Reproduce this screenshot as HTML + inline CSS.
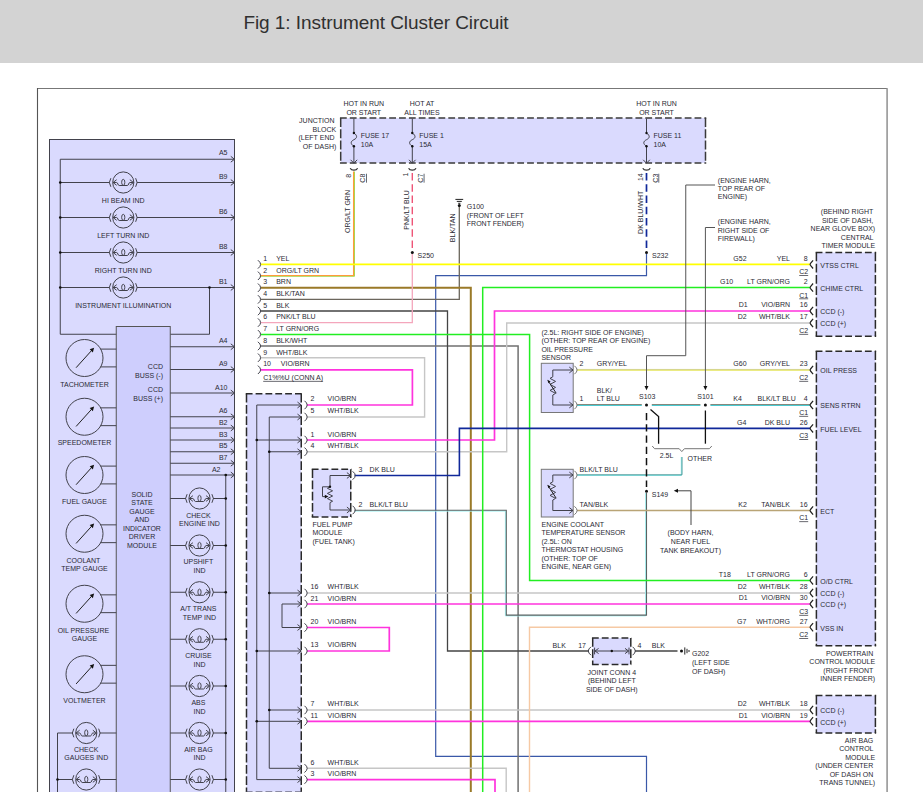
<!DOCTYPE html>
<html lang="en"><head><meta charset="utf-8"><title>Fig 1: Instrument Cluster Circuit</title>
<style>
html,body{margin:0;padding:0;background:#fff;}
body{width:923px;height:812px;overflow:hidden;position:relative;font-family:"Liberation Sans",Arial,sans-serif;}
#hdr{position:absolute;left:0;top:0;width:923px;height:63px;background:#d3d3d3;}
#hdr h1{position:absolute;left:243.4px;top:10.9px;margin:0;font-weight:normal;font-size:19px;line-height:24px;color:#303030;letter-spacing:-0.06px;white-space:nowrap;}
#dia{position:absolute;left:0;top:0;}
#dia text{font-family:"Liberation Sans",Arial,sans-serif;font-size:7px;fill:#2a2a34;}
</style></head><body>
<div id="hdr"><h1>Fig 1: Instrument Cluster Circuit</h1></div>
<svg id="dia" width="923" height="812" viewBox="0 0 923 812">
<defs><clipPath id="clip"><rect x="36" y="87" width="853" height="704.9"/></clipPath></defs>
<g clip-path="url(#clip)">
<line x1="37.5" y1="88.5" x2="887.5" y2="88.5" stroke="#777" stroke-width="1" />
<line x1="37.5" y1="88" x2="37.5" y2="800" stroke="#555" stroke-width="1.1" />
<line x1="887.1" y1="88.5" x2="887.1" y2="800" stroke="#9c9c9c" stroke-width="1.7" />
<rect x="49.5" y="139.5" width="185.0" height="660.5" fill="#dadafe" stroke="#42424c" stroke-width="1" />
<polyline points="234.5,159.25 60.25,159.25 60.25,334.25 209.5,334.25 209.5,287.5" fill="none" stroke="#42424c" stroke-width="1" />
<polyline points="230.8,156.35 234.5,159.25 230.8,162.15" fill="none" stroke="#42424c" stroke-width="1" />
<line x1="60.25" y1="182.5" x2="109.65" y2="182.5" stroke="#42424c" stroke-width="1" />
<line x1="136.85" y1="182.5" x2="234.5" y2="182.5" stroke="#42424c" stroke-width="1" />
<circle cx="123.25" cy="182.5" r="10.6" fill="none" stroke="#42424c" stroke-width="1"/>
<path d="M110.85,178.2 Q107.85,182.5 110.85,186.8" fill="none" stroke="#42424c" stroke-width="1" />
<path d="M135.65,178.2 Q138.65,182.5 135.65,186.8" fill="none" stroke="#42424c" stroke-width="1" />
<polyline points="116.65,179.7 113.05,182.5 116.65,185.3" fill="none" stroke="#42424c" stroke-width="1" />
<polyline points="129.85,179.7 133.45,182.5 129.85,185.3" fill="none" stroke="#42424c" stroke-width="1" />
<path d="M113.05,182.5 L116.65,182.5 C117.95,182.5 117.75,185.5 119.15,185.5 L127.35,185.5 C128.75,185.5 128.55,182.5 129.85,182.5 L133.45,182.5" fill="none" stroke="#42424c" stroke-width="1" />
<ellipse cx="123.25" cy="182.3" rx="1.6" ry="3" fill="none" stroke="#42424c" stroke-width="0.95"/>
<circle cx="60.25" cy="182.5" r="1.3" fill="#111"/>
<polyline points="230.8,179.6 234.5,182.5 230.8,185.4" fill="none" stroke="#42424c" stroke-width="1" />
<line x1="60.25" y1="217.5" x2="109.65" y2="217.5" stroke="#42424c" stroke-width="1" />
<line x1="136.85" y1="217.5" x2="234.5" y2="217.5" stroke="#42424c" stroke-width="1" />
<circle cx="123.25" cy="217.5" r="10.6" fill="none" stroke="#42424c" stroke-width="1"/>
<path d="M110.85,213.2 Q107.85,217.5 110.85,221.8" fill="none" stroke="#42424c" stroke-width="1" />
<path d="M135.65,213.2 Q138.65,217.5 135.65,221.8" fill="none" stroke="#42424c" stroke-width="1" />
<polyline points="116.65,214.7 113.05,217.5 116.65,220.3" fill="none" stroke="#42424c" stroke-width="1" />
<polyline points="129.85,214.7 133.45,217.5 129.85,220.3" fill="none" stroke="#42424c" stroke-width="1" />
<path d="M113.05,217.5 L116.65,217.5 C117.95,217.5 117.75,220.5 119.15,220.5 L127.35,220.5 C128.75,220.5 128.55,217.5 129.85,217.5 L133.45,217.5" fill="none" stroke="#42424c" stroke-width="1" />
<ellipse cx="123.25" cy="217.3" rx="1.6" ry="3" fill="none" stroke="#42424c" stroke-width="0.95"/>
<circle cx="60.25" cy="217.5" r="1.3" fill="#111"/>
<polyline points="230.8,214.6 234.5,217.5 230.8,220.4" fill="none" stroke="#42424c" stroke-width="1" />
<line x1="60.25" y1="252.5" x2="109.65" y2="252.5" stroke="#42424c" stroke-width="1" />
<line x1="136.85" y1="252.5" x2="234.5" y2="252.5" stroke="#42424c" stroke-width="1" />
<circle cx="123.25" cy="252.5" r="10.6" fill="none" stroke="#42424c" stroke-width="1"/>
<path d="M110.85,248.2 Q107.85,252.5 110.85,256.8" fill="none" stroke="#42424c" stroke-width="1" />
<path d="M135.65,248.2 Q138.65,252.5 135.65,256.8" fill="none" stroke="#42424c" stroke-width="1" />
<polyline points="116.65,249.7 113.05,252.5 116.65,255.3" fill="none" stroke="#42424c" stroke-width="1" />
<polyline points="129.85,249.7 133.45,252.5 129.85,255.3" fill="none" stroke="#42424c" stroke-width="1" />
<path d="M113.05,252.5 L116.65,252.5 C117.95,252.5 117.75,255.5 119.15,255.5 L127.35,255.5 C128.75,255.5 128.55,252.5 129.85,252.5 L133.45,252.5" fill="none" stroke="#42424c" stroke-width="1" />
<ellipse cx="123.25" cy="252.3" rx="1.6" ry="3" fill="none" stroke="#42424c" stroke-width="0.95"/>
<circle cx="60.25" cy="252.5" r="1.3" fill="#111"/>
<polyline points="230.8,249.6 234.5,252.5 230.8,255.4" fill="none" stroke="#42424c" stroke-width="1" />
<line x1="60.25" y1="287.5" x2="109.65" y2="287.5" stroke="#42424c" stroke-width="1" />
<line x1="136.85" y1="287.5" x2="234.5" y2="287.5" stroke="#42424c" stroke-width="1" />
<circle cx="123.25" cy="287.5" r="10.6" fill="none" stroke="#42424c" stroke-width="1"/>
<path d="M110.85,283.2 Q107.85,287.5 110.85,291.8" fill="none" stroke="#42424c" stroke-width="1" />
<path d="M135.65,283.2 Q138.65,287.5 135.65,291.8" fill="none" stroke="#42424c" stroke-width="1" />
<polyline points="116.65,284.7 113.05,287.5 116.65,290.3" fill="none" stroke="#42424c" stroke-width="1" />
<polyline points="129.85,284.7 133.45,287.5 129.85,290.3" fill="none" stroke="#42424c" stroke-width="1" />
<path d="M113.05,287.5 L116.65,287.5 C117.95,287.5 117.75,290.5 119.15,290.5 L127.35,290.5 C128.75,290.5 128.55,287.5 129.85,287.5 L133.45,287.5" fill="none" stroke="#42424c" stroke-width="1" />
<ellipse cx="123.25" cy="287.3" rx="1.6" ry="3" fill="none" stroke="#42424c" stroke-width="0.95"/>
<circle cx="60.25" cy="287.5" r="1.3" fill="#111"/>
<polyline points="230.8,284.6 234.5,287.5 230.8,290.4" fill="none" stroke="#42424c" stroke-width="1" />
<circle cx="209.5" cy="287.5" r="1.3" fill="#111"/>
<text x="227.5" y="155.35" text-anchor="end" >A5</text>
<text x="227.5" y="178.6" text-anchor="end" >B9</text>
<text x="227.5" y="213.6" text-anchor="end" >B6</text>
<text x="227.5" y="248.6" text-anchor="end" >B8</text>
<text x="227.5" y="283.6" text-anchor="end" >B1</text>
<text x="123.25" y="203.0" text-anchor="middle" >HI BEAM IND</text>
<text x="123.25" y="238.0" text-anchor="middle" >LEFT TURN IND</text>
<text x="123.25" y="273.0" text-anchor="middle" >RIGHT TURN IND</text>
<text x="123.25" y="308.0" text-anchor="middle" >INSTRUMENT ILLUMINATION</text>
<rect x="116.25" y="326.5" width="54.0" height="473.5" fill="#cecefd" stroke="#555" stroke-width="1" />
<circle cx="84.5" cy="358" r="18.5" fill="none" stroke="#42424c" stroke-width="1"/>
<line x1="100.71850794617063" y1="349.1" x2="116.25" y2="349.1" stroke="#42424c" stroke-width="1" />
<line x1="100.71850794617063" y1="366.9" x2="116.25" y2="366.9" stroke="#42424c" stroke-width="1" />
<line x1="76.1" y1="367.7" x2="92.6" y2="349.40000000000003" stroke="#222" stroke-width="1" />
<polygon points="94.1,347.8 89.69999999999999,349.2 92.89999999999999,352.40000000000003" fill="#111"/>
<circle cx="84.5" cy="416.75" r="18.5" fill="none" stroke="#42424c" stroke-width="1"/>
<line x1="100.71850794617063" y1="407.85" x2="116.25" y2="407.85" stroke="#42424c" stroke-width="1" />
<line x1="100.71850794617063" y1="425.65" x2="116.25" y2="425.65" stroke="#42424c" stroke-width="1" />
<line x1="76.1" y1="426.45" x2="92.6" y2="408.15000000000003" stroke="#222" stroke-width="1" />
<polygon points="94.1,406.55 89.69999999999999,407.95 92.89999999999999,411.15000000000003" fill="#111"/>
<circle cx="84.5" cy="475" r="18.5" fill="none" stroke="#42424c" stroke-width="1"/>
<line x1="100.71850794617063" y1="466.1" x2="116.25" y2="466.1" stroke="#42424c" stroke-width="1" />
<line x1="100.71850794617063" y1="483.9" x2="116.25" y2="483.9" stroke="#42424c" stroke-width="1" />
<line x1="76.1" y1="484.7" x2="92.6" y2="466.40000000000003" stroke="#222" stroke-width="1" />
<polygon points="94.1,464.8 89.69999999999999,466.2 92.89999999999999,469.40000000000003" fill="#111"/>
<circle cx="84.5" cy="533.75" r="18.5" fill="none" stroke="#42424c" stroke-width="1"/>
<line x1="100.71850794617063" y1="524.85" x2="116.25" y2="524.85" stroke="#42424c" stroke-width="1" />
<line x1="100.71850794617063" y1="542.65" x2="116.25" y2="542.65" stroke="#42424c" stroke-width="1" />
<line x1="76.1" y1="543.45" x2="92.6" y2="525.15" stroke="#222" stroke-width="1" />
<polygon points="94.1,523.55 89.69999999999999,524.9499999999999 92.89999999999999,528.15" fill="#111"/>
<circle cx="84.5" cy="603.75" r="18.5" fill="none" stroke="#42424c" stroke-width="1"/>
<line x1="100.71850794617063" y1="594.85" x2="116.25" y2="594.85" stroke="#42424c" stroke-width="1" />
<line x1="100.71850794617063" y1="612.65" x2="116.25" y2="612.65" stroke="#42424c" stroke-width="1" />
<line x1="76.1" y1="613.45" x2="92.6" y2="595.15" stroke="#222" stroke-width="1" />
<polygon points="94.1,593.55 89.69999999999999,594.9499999999999 92.89999999999999,598.15" fill="#111"/>
<circle cx="84.5" cy="674.25" r="18.5" fill="none" stroke="#42424c" stroke-width="1"/>
<line x1="100.71850794617063" y1="665.35" x2="116.25" y2="665.35" stroke="#42424c" stroke-width="1" />
<line x1="100.71850794617063" y1="683.15" x2="116.25" y2="683.15" stroke="#42424c" stroke-width="1" />
<line x1="76.1" y1="683.95" x2="92.6" y2="665.65" stroke="#222" stroke-width="1" />
<polygon points="94.1,664.05 89.69999999999999,665.4499999999999 92.89999999999999,668.65" fill="#111"/>
<text x="84.5" y="387.0" text-anchor="middle" >TACHOMETER</text>
<text x="84.5" y="445.0" text-anchor="middle" >SPEEDOMETER</text>
<text x="84.5" y="503.75" text-anchor="middle" >FUEL GAUGE</text>
<text x="83.4" y="563.0" text-anchor="middle" >COOLANT</text>
<text x="84.5" y="571.0" text-anchor="middle" >TEMP GAUGE</text>
<text x="83.4" y="633.0" text-anchor="middle" >OIL PRESSURE</text>
<text x="84.5" y="641.0" text-anchor="middle" >GAUGE</text>
<text x="84.5" y="703.0" text-anchor="middle" >VOLTMETER</text>
<line x1="170.25" y1="346.75" x2="234.5" y2="346.75" stroke="#42424c" stroke-width="1" />
<polyline points="230.8,343.85 234.5,346.75 230.8,349.65" fill="none" stroke="#42424c" stroke-width="1" />
<text x="227.5" y="343.25" text-anchor="end" >A4</text>
<line x1="170.25" y1="369.5" x2="234.5" y2="369.5" stroke="#42424c" stroke-width="1" />
<polyline points="230.8,366.6 234.5,369.5 230.8,372.4" fill="none" stroke="#42424c" stroke-width="1" />
<text x="227.5" y="366.0" text-anchor="end" >A9</text>
<line x1="170.25" y1="393" x2="234.5" y2="393" stroke="#42424c" stroke-width="1" />
<polyline points="230.8,390.1 234.5,393 230.8,395.9" fill="none" stroke="#42424c" stroke-width="1" />
<text x="227.5" y="389.5" text-anchor="end" >A10</text>
<line x1="170.25" y1="416.75" x2="234.5" y2="416.75" stroke="#42424c" stroke-width="1" />
<polyline points="230.8,413.85 234.5,416.75 230.8,419.65" fill="none" stroke="#42424c" stroke-width="1" />
<text x="227.5" y="413.25" text-anchor="end" >A6</text>
<line x1="170.25" y1="428" x2="234.5" y2="428" stroke="#42424c" stroke-width="1" />
<polyline points="230.8,425.1 234.5,428 230.8,430.9" fill="none" stroke="#42424c" stroke-width="1" />
<text x="227.5" y="424.5" text-anchor="end" >B2</text>
<line x1="170.25" y1="440" x2="234.5" y2="440" stroke="#42424c" stroke-width="1" />
<polyline points="230.8,437.1 234.5,440 230.8,442.9" fill="none" stroke="#42424c" stroke-width="1" />
<text x="227.5" y="436.5" text-anchor="end" >B3</text>
<line x1="170.25" y1="451.75" x2="234.5" y2="451.75" stroke="#42424c" stroke-width="1" />
<polyline points="230.8,448.85 234.5,451.75 230.8,454.65" fill="none" stroke="#42424c" stroke-width="1" />
<text x="227.5" y="448.25" text-anchor="end" >B5</text>
<line x1="170.25" y1="463.25" x2="234.5" y2="463.25" stroke="#42424c" stroke-width="1" />
<polyline points="230.8,460.35 234.5,463.25 230.8,466.15" fill="none" stroke="#42424c" stroke-width="1" />
<text x="227.5" y="459.75" text-anchor="end" >B7</text>
<line x1="170.25" y1="475" x2="234.5" y2="475" stroke="#42424c" stroke-width="1" />
<polyline points="230.8,472.1 234.5,475 230.8,477.9" fill="none" stroke="#42424c" stroke-width="1" />
<text x="220.5" y="471.5" text-anchor="end" >A2</text>
<text x="163" y="369.25" text-anchor="end" >CCD</text>
<text x="163" y="378.0" text-anchor="end" >BUSS (-)</text>
<text x="163" y="392.0" text-anchor="end" >CCD</text>
<text x="163" y="400.75" text-anchor="end" >BUSS (+)</text>
<text x="142" y="497.0" text-anchor="middle" >SOLID</text>
<text x="142" y="505.42" text-anchor="middle" >STATE</text>
<text x="142" y="513.84" text-anchor="middle" >GAUGE</text>
<text x="142" y="522.26" text-anchor="middle" >AND</text>
<text x="142" y="530.68" text-anchor="middle" >INDICATOR</text>
<text x="142" y="539.1" text-anchor="middle" >DRIVER</text>
<text x="142" y="547.52" text-anchor="middle" >MODULE</text>
<line x1="225.75" y1="475" x2="225.75" y2="800" stroke="#42424c" stroke-width="1" />
<circle cx="225.75" cy="475" r="1.3" fill="#111"/>
<line x1="170.25" y1="498.5" x2="185.9" y2="498.5" stroke="#42424c" stroke-width="1" />
<line x1="213.1" y1="498.5" x2="225.75" y2="498.5" stroke="#42424c" stroke-width="1" />
<circle cx="199.5" cy="498.5" r="10.6" fill="none" stroke="#42424c" stroke-width="1"/>
<path d="M187.1,494.2 Q184.1,498.5 187.1,502.8" fill="none" stroke="#42424c" stroke-width="1" />
<path d="M211.9,494.2 Q214.9,498.5 211.9,502.8" fill="none" stroke="#42424c" stroke-width="1" />
<polyline points="192.9,495.7 189.3,498.5 192.9,501.3" fill="none" stroke="#42424c" stroke-width="1" />
<polyline points="206.1,495.7 209.7,498.5 206.1,501.3" fill="none" stroke="#42424c" stroke-width="1" />
<path d="M189.3,498.5 L192.9,498.5 C194.2,498.5 194.0,501.5 195.4,501.5 L203.6,501.5 C205.0,501.5 204.8,498.5 206.1,498.5 L209.7,498.5" fill="none" stroke="#42424c" stroke-width="1" />
<ellipse cx="199.5" cy="498.3" rx="1.6" ry="3" fill="none" stroke="#42424c" stroke-width="0.95"/>
<circle cx="225.75" cy="498.5" r="1.3" fill="#111"/>
<line x1="170.25" y1="545.5" x2="185.9" y2="545.5" stroke="#42424c" stroke-width="1" />
<line x1="213.1" y1="545.5" x2="225.75" y2="545.5" stroke="#42424c" stroke-width="1" />
<circle cx="199.5" cy="545.5" r="10.6" fill="none" stroke="#42424c" stroke-width="1"/>
<path d="M187.1,541.2 Q184.1,545.5 187.1,549.8" fill="none" stroke="#42424c" stroke-width="1" />
<path d="M211.9,541.2 Q214.9,545.5 211.9,549.8" fill="none" stroke="#42424c" stroke-width="1" />
<polyline points="192.9,542.7 189.3,545.5 192.9,548.3" fill="none" stroke="#42424c" stroke-width="1" />
<polyline points="206.1,542.7 209.7,545.5 206.1,548.3" fill="none" stroke="#42424c" stroke-width="1" />
<path d="M189.3,545.5 L192.9,545.5 C194.2,545.5 194.0,548.5 195.4,548.5 L203.6,548.5 C205.0,548.5 204.8,545.5 206.1,545.5 L209.7,545.5" fill="none" stroke="#42424c" stroke-width="1" />
<ellipse cx="199.5" cy="545.3" rx="1.6" ry="3" fill="none" stroke="#42424c" stroke-width="0.95"/>
<circle cx="225.75" cy="545.5" r="1.3" fill="#111"/>
<line x1="170.25" y1="592.25" x2="185.9" y2="592.25" stroke="#42424c" stroke-width="1" />
<line x1="213.1" y1="592.25" x2="225.75" y2="592.25" stroke="#42424c" stroke-width="1" />
<circle cx="199.5" cy="592.25" r="10.6" fill="none" stroke="#42424c" stroke-width="1"/>
<path d="M187.1,587.95 Q184.1,592.25 187.1,596.55" fill="none" stroke="#42424c" stroke-width="1" />
<path d="M211.9,587.95 Q214.9,592.25 211.9,596.55" fill="none" stroke="#42424c" stroke-width="1" />
<polyline points="192.9,589.45 189.3,592.25 192.9,595.05" fill="none" stroke="#42424c" stroke-width="1" />
<polyline points="206.1,589.45 209.7,592.25 206.1,595.05" fill="none" stroke="#42424c" stroke-width="1" />
<path d="M189.3,592.25 L192.9,592.25 C194.2,592.25 194.0,595.25 195.4,595.25 L203.6,595.25 C205.0,595.25 204.8,592.25 206.1,592.25 L209.7,592.25" fill="none" stroke="#42424c" stroke-width="1" />
<ellipse cx="199.5" cy="592.05" rx="1.6" ry="3" fill="none" stroke="#42424c" stroke-width="0.95"/>
<circle cx="225.75" cy="592.25" r="1.3" fill="#111"/>
<line x1="170.25" y1="639.25" x2="185.9" y2="639.25" stroke="#42424c" stroke-width="1" />
<line x1="213.1" y1="639.25" x2="225.75" y2="639.25" stroke="#42424c" stroke-width="1" />
<circle cx="199.5" cy="639.25" r="10.6" fill="none" stroke="#42424c" stroke-width="1"/>
<path d="M187.1,634.95 Q184.1,639.25 187.1,643.55" fill="none" stroke="#42424c" stroke-width="1" />
<path d="M211.9,634.95 Q214.9,639.25 211.9,643.55" fill="none" stroke="#42424c" stroke-width="1" />
<polyline points="192.9,636.45 189.3,639.25 192.9,642.05" fill="none" stroke="#42424c" stroke-width="1" />
<polyline points="206.1,636.45 209.7,639.25 206.1,642.05" fill="none" stroke="#42424c" stroke-width="1" />
<path d="M189.3,639.25 L192.9,639.25 C194.2,639.25 194.0,642.25 195.4,642.25 L203.6,642.25 C205.0,642.25 204.8,639.25 206.1,639.25 L209.7,639.25" fill="none" stroke="#42424c" stroke-width="1" />
<ellipse cx="199.5" cy="639.05" rx="1.6" ry="3" fill="none" stroke="#42424c" stroke-width="0.95"/>
<circle cx="225.75" cy="639.25" r="1.3" fill="#111"/>
<line x1="170.25" y1="686" x2="185.9" y2="686" stroke="#42424c" stroke-width="1" />
<line x1="213.1" y1="686" x2="225.75" y2="686" stroke="#42424c" stroke-width="1" />
<circle cx="199.5" cy="686" r="10.6" fill="none" stroke="#42424c" stroke-width="1"/>
<path d="M187.1,681.7 Q184.1,686 187.1,690.3" fill="none" stroke="#42424c" stroke-width="1" />
<path d="M211.9,681.7 Q214.9,686 211.9,690.3" fill="none" stroke="#42424c" stroke-width="1" />
<polyline points="192.9,683.2 189.3,686 192.9,688.8" fill="none" stroke="#42424c" stroke-width="1" />
<polyline points="206.1,683.2 209.7,686 206.1,688.8" fill="none" stroke="#42424c" stroke-width="1" />
<path d="M189.3,686 L192.9,686 C194.2,686 194.0,689 195.4,689 L203.6,689 C205.0,689 204.8,686 206.1,686 L209.7,686" fill="none" stroke="#42424c" stroke-width="1" />
<ellipse cx="199.5" cy="685.8" rx="1.6" ry="3" fill="none" stroke="#42424c" stroke-width="0.95"/>
<circle cx="225.75" cy="686" r="1.3" fill="#111"/>
<line x1="170.25" y1="733" x2="185.9" y2="733" stroke="#42424c" stroke-width="1" />
<line x1="213.1" y1="733" x2="225.75" y2="733" stroke="#42424c" stroke-width="1" />
<circle cx="199.5" cy="733" r="10.6" fill="none" stroke="#42424c" stroke-width="1"/>
<path d="M187.1,728.7 Q184.1,733 187.1,737.3" fill="none" stroke="#42424c" stroke-width="1" />
<path d="M211.9,728.7 Q214.9,733 211.9,737.3" fill="none" stroke="#42424c" stroke-width="1" />
<polyline points="192.9,730.2 189.3,733 192.9,735.8" fill="none" stroke="#42424c" stroke-width="1" />
<polyline points="206.1,730.2 209.7,733 206.1,735.8" fill="none" stroke="#42424c" stroke-width="1" />
<path d="M189.3,733 L192.9,733 C194.2,733 194.0,736 195.4,736 L203.6,736 C205.0,736 204.8,733 206.1,733 L209.7,733" fill="none" stroke="#42424c" stroke-width="1" />
<ellipse cx="199.5" cy="732.8" rx="1.6" ry="3" fill="none" stroke="#42424c" stroke-width="0.95"/>
<circle cx="225.75" cy="733" r="1.3" fill="#111"/>
<line x1="170.25" y1="779.5" x2="185.9" y2="779.5" stroke="#42424c" stroke-width="1" />
<line x1="213.1" y1="779.5" x2="225.75" y2="779.5" stroke="#42424c" stroke-width="1" />
<circle cx="199.5" cy="779.5" r="10.6" fill="none" stroke="#42424c" stroke-width="1"/>
<path d="M187.1,775.2 Q184.1,779.5 187.1,783.8" fill="none" stroke="#42424c" stroke-width="1" />
<path d="M211.9,775.2 Q214.9,779.5 211.9,783.8" fill="none" stroke="#42424c" stroke-width="1" />
<polyline points="192.9,776.7 189.3,779.5 192.9,782.3" fill="none" stroke="#42424c" stroke-width="1" />
<polyline points="206.1,776.7 209.7,779.5 206.1,782.3" fill="none" stroke="#42424c" stroke-width="1" />
<path d="M189.3,779.5 L192.9,779.5 C194.2,779.5 194.0,782.5 195.4,782.5 L203.6,782.5 C205.0,782.5 204.8,779.5 206.1,779.5 L209.7,779.5" fill="none" stroke="#42424c" stroke-width="1" />
<ellipse cx="199.5" cy="779.3" rx="1.6" ry="3" fill="none" stroke="#42424c" stroke-width="0.95"/>
<circle cx="225.75" cy="779.5" r="1.3" fill="#111"/>
<text x="198.4" y="518.0" text-anchor="middle" >CHECK</text>
<text x="199.5" y="526.0" text-anchor="middle" >ENGINE IND</text>
<text x="198.4" y="564.25" text-anchor="middle" >UPSHIFT</text>
<text x="199.5" y="573.0" text-anchor="middle" >IND</text>
<text x="198.4" y="611.0" text-anchor="middle" >A/T TRANS</text>
<text x="199.5" y="620.0" text-anchor="middle" >TEMP IND</text>
<text x="198.4" y="658.0" text-anchor="middle" >CRUISE</text>
<text x="199.5" y="666.75" text-anchor="middle" >IND</text>
<text x="198.4" y="705.0" text-anchor="middle" >ABS</text>
<text x="199.5" y="714.25" text-anchor="middle" >IND</text>
<text x="198.4" y="751.75" text-anchor="middle" >AIR BAG</text>
<text x="199.5" y="759.75" text-anchor="middle" >IND</text>
<polyline points="72.65,733 57.5,733 57.5,800" fill="none" stroke="#42424c" stroke-width="1" />
<line x1="99.85" y1="733" x2="116.25" y2="733" stroke="#42424c" stroke-width="1" />
<circle cx="86.25" cy="733" r="10.6" fill="none" stroke="#42424c" stroke-width="1"/>
<path d="M73.85,728.7 Q70.85,733 73.85,737.3" fill="none" stroke="#42424c" stroke-width="1" />
<path d="M98.65,728.7 Q101.65,733 98.65,737.3" fill="none" stroke="#42424c" stroke-width="1" />
<polyline points="79.65,730.2 76.05,733 79.65,735.8" fill="none" stroke="#42424c" stroke-width="1" />
<polyline points="92.85,730.2 96.45,733 92.85,735.8" fill="none" stroke="#42424c" stroke-width="1" />
<path d="M76.05,733 L79.65,733 C80.95,733 80.75,736 82.15,736 L90.35,736 C91.75,736 91.55,733 92.85,733 L96.45,733" fill="none" stroke="#42424c" stroke-width="1" />
<ellipse cx="86.25" cy="732.8" rx="1.6" ry="3" fill="none" stroke="#42424c" stroke-width="0.95"/>
<line x1="57.5" y1="779.5" x2="72.65" y2="779.5" stroke="#42424c" stroke-width="1" />
<line x1="99.85" y1="779.5" x2="116.25" y2="779.5" stroke="#42424c" stroke-width="1" />
<circle cx="86.25" cy="779.5" r="10.6" fill="none" stroke="#42424c" stroke-width="1"/>
<path d="M73.85,775.2 Q70.85,779.5 73.85,783.8" fill="none" stroke="#42424c" stroke-width="1" />
<path d="M98.65,775.2 Q101.65,779.5 98.65,783.8" fill="none" stroke="#42424c" stroke-width="1" />
<polyline points="79.65,776.7 76.05,779.5 79.65,782.3" fill="none" stroke="#42424c" stroke-width="1" />
<polyline points="92.85,776.7 96.45,779.5 92.85,782.3" fill="none" stroke="#42424c" stroke-width="1" />
<path d="M76.05,779.5 L79.65,779.5 C80.95,779.5 80.75,782.5 82.15,782.5 L90.35,782.5 C91.75,782.5 91.55,779.5 92.85,779.5 L96.45,779.5" fill="none" stroke="#42424c" stroke-width="1" />
<ellipse cx="86.25" cy="779.3" rx="1.6" ry="3" fill="none" stroke="#42424c" stroke-width="0.95"/>
<circle cx="57.5" cy="779.5" r="1.3" fill="#111"/>
<text x="86.25" y="751.75" text-anchor="middle" >CHECK</text>
<text x="86.25" y="759.75" text-anchor="middle" >GAUGES IND</text>
<polyline points="646.5,254 646.5,275.7 435.7,275.7 435.7,756.3 646.5,756.3 646.5,800" fill="none" stroke="#3a58a8" stroke-width="1.2" />
<polyline points="260.6,346 518.1,346 518.1,800" fill="none" stroke="#707070" stroke-width="1.5" />
<polyline points="260.6,311 447.5,311 447.5,651 589,651" fill="none" stroke="#444444" stroke-width="1.3" />
<line x1="635" y1="651" x2="677.5" y2="651" stroke="#444444" stroke-width="1.3" />
<polyline points="260.6,299.4 459.3,299.4 459.3,206" fill="none" stroke="#6b665c" stroke-width="1.3" />
<polyline points="260.6,287.7 470.8,287.7 470.8,800" fill="none" stroke="#9a7a28" stroke-width="2" />
<polyline points="260.6,357.7 424.6,357.7 424.6,417 307,417" fill="none" stroke="#c6c6c6" stroke-width="1.4" />
<polyline points="307,451.75 506.7,451.75 506.7,323 810.2,323" fill="none" stroke="#c6c6c6" stroke-width="1.4" />
<line x1="307" y1="593" x2="810.2" y2="593" stroke="#c6c6c6" stroke-width="1.4" />
<line x1="307" y1="710" x2="810.2" y2="710" stroke="#c6c6c6" stroke-width="1.4" />
<polyline points="307,768.3 506.2,768.3 506.2,800" fill="none" stroke="#c6c6c6" stroke-width="1.4" />
<polyline points="810.2,627.2 529.5,627.2 529.5,800" fill="none" stroke="#f6c9a4" stroke-width="1.4" />
<polyline points="354.5,511.1 505.4,511.1 505.4,615.9 645.6,615.9 645.6,493" fill="none" stroke="#a4f2f2" stroke-width="1" />
<polyline points="354.5,510.3 506.3,510.3 506.3,615.1 646.5,615.1 646.5,493" fill="none" stroke="#5a6262" stroke-width="1.1" />
<polyline points="260.6,334.5 529.6,334.5 529.6,580.4 810.2,580.4" fill="none" stroke="#22ee22" stroke-width="1.5" />
<polyline points="810.2,287.6 482.7,287.6 482.7,800" fill="none" stroke="#22ee22" stroke-width="1.5" />
<polyline points="260.6,369.8 412.4,369.8 412.4,405 307,405" fill="none" stroke="#ff33dd" stroke-width="1.7" />
<polyline points="307,440 494.5,440 494.5,311 810.2,311" fill="none" stroke="#ff33dd" stroke-width="1.7" />
<line x1="307" y1="604" x2="810.2" y2="604" stroke="#ff33dd" stroke-width="1.7" />
<polyline points="307,627.5 389.3,627.5 389.3,651 307,651" fill="none" stroke="#ff33dd" stroke-width="1.7" />
<line x1="307" y1="721.3" x2="810.2" y2="721.3" stroke="#ff33dd" stroke-width="1.7" />
<polyline points="307,779.6 495,779.6 495,800" fill="none" stroke="#ff33dd" stroke-width="1.7" />
<polyline points="354.5,475.5 459.4,475.5 459.4,428.4 810.2,428.4" fill="none" stroke="#10289a" stroke-width="1.6" />
<polyline points="260.6,322.6 412.3,322.6 412.3,254" fill="none" stroke="#f4a6bc" stroke-width="1.3" />
<line x1="412.3" y1="173" x2="412.3" y2="248.5" stroke="#ee5577" stroke-width="1.4" stroke-dasharray="7.4 3.85"/>
<polyline points="260.6,276.3 354.5,276.3 354.5,171.5" fill="none" stroke="#a8d850" stroke-width="1" />
<polyline points="260.6,275.4 353.5,275.4 353.5,171.5" fill="none" stroke="#ff9a3c" stroke-width="1.05" />
<line x1="260.6" y1="264.4" x2="810.2" y2="264.4" stroke="#ffff00" stroke-width="1.6" />
<line x1="646.5" y1="173" x2="646.5" y2="248.5" stroke="#10289a" stroke-width="1.7" stroke-dasharray="7.4 3.85"/>
<line x1="577" y1="370" x2="810.2" y2="370" stroke="#e4e45a" stroke-width="1.4" />
<line x1="577" y1="369.4" x2="810.2" y2="369.4" stroke="#bdbd9a" stroke-width="0.5" />
<line x1="577" y1="404.5" x2="641.8" y2="404.5" stroke="#8f8274" stroke-width="1" />
<line x1="577" y1="405.4" x2="641.8" y2="405.4" stroke="#35c4cc" stroke-width="1" />
<line x1="651.8" y1="404.5" x2="700.4" y2="404.5" stroke="#8f8274" stroke-width="1" />
<line x1="651.8" y1="405.4" x2="700.4" y2="405.4" stroke="#35c4cc" stroke-width="1" />
<line x1="710.4" y1="404.5" x2="810.2" y2="404.5" stroke="#8f8274" stroke-width="1" />
<line x1="710.4" y1="405.4" x2="810.2" y2="405.4" stroke="#35c4cc" stroke-width="1" />
<polyline points="577,475.5 681.3,475.5 681.3,457" fill="none" stroke="#7fe6e6" stroke-width="0.9" />
<polyline points="577,474.8 682,474.8 682,457" fill="none" stroke="#4a9a9a" stroke-width="1" />
<line x1="577" y1="510.5" x2="810.2" y2="510.5" stroke="#b9a476" stroke-width="1.4" />
<line x1="646.5" y1="412.9" x2="646.5" y2="487" stroke="#111" stroke-width="1.5" stroke-dasharray="7.4 3.85"/>
<polyline points="650.5,409.4 658.6,416.6 658.6,443.7" fill="none" stroke="#111" stroke-width="1.3" />
<line x1="705.4" y1="410.5" x2="705.4" y2="443.7" stroke="#111" stroke-width="1.3" />
<path d="M652.2,446 L654.6,448.7 L679.2,448.7 L681.8,451.6 L684.4,448.7 L709.4,448.7 L711.8,446" fill="none" stroke="#777" stroke-width="1" />
<circle cx="646.5" cy="405" r="1.5" fill="#111"/>
<circle cx="705.4" cy="405" r="1.5" fill="#111"/>
<circle cx="646.5" cy="491.3" r="1.5" fill="#111"/>
<circle cx="646.5" cy="252.5" r="1.5" fill="#111"/>
<circle cx="412.3" cy="252.5" r="1.5" fill="#111"/>
<polyline points="715,185 685.75,185 685.75,355.7 646.5,355.7 646.5,386.5" fill="none" stroke="#555" stroke-width="1" />
<polyline points="715,227.5 705.4,227.5 705.4,386.5" fill="none" stroke="#555" stroke-width="1" />
<polygon points="644.5,386 648.5,386 646.5,390.2" fill="#111"/>
<polygon points="703.4,386 707.4,386 705.4,390.2" fill="#111"/>
<polyline points="691,525 691,490.8 677,490.8" fill="none" stroke="#444" stroke-width="1" />
<polygon points="673.8,490.8 678,488.8 678,492.8" fill="#111"/>
<path d="M257.9,260.2 Q263.29999999999995,264.4 257.9,268.59999999999997" fill="none" stroke="#42424c" stroke-width="1" />
<text x="263.2" y="261.1" >1</text>
<text x="276.2" y="261.1" >YEL</text>
<path d="M257.9,271.6 Q263.29999999999995,275.8 257.9,280.0" fill="none" stroke="#42424c" stroke-width="1" />
<text x="263.2" y="272.5" >2</text>
<text x="276.2" y="272.5" >ORG/LT GRN</text>
<path d="M257.9,283.5 Q263.29999999999995,287.7 257.9,291.9" fill="none" stroke="#42424c" stroke-width="1" />
<text x="263.2" y="284.4" >3</text>
<text x="276.2" y="284.4" >BRN</text>
<path d="M257.9,295.2 Q263.29999999999995,299.4 257.9,303.59999999999997" fill="none" stroke="#42424c" stroke-width="1" />
<text x="263.2" y="296.1" >4</text>
<text x="276.2" y="296.1" >BLK/TAN</text>
<path d="M257.9,306.8 Q263.29999999999995,311 257.9,315.2" fill="none" stroke="#42424c" stroke-width="1" />
<text x="263.2" y="307.7" >5</text>
<text x="276.2" y="307.7" >BLK</text>
<path d="M257.9,318.40000000000003 Q263.29999999999995,322.6 257.9,326.8" fill="none" stroke="#42424c" stroke-width="1" />
<text x="263.2" y="319.3" >6</text>
<text x="276.2" y="319.3" >PNK/LT BLU</text>
<path d="M257.9,330.1 Q263.29999999999995,334.3 257.9,338.5" fill="none" stroke="#42424c" stroke-width="1" />
<text x="263.2" y="331.0" >7</text>
<text x="276.2" y="331.0" >LT GRN/ORG</text>
<path d="M257.9,341.8 Q263.29999999999995,346 257.9,350.2" fill="none" stroke="#42424c" stroke-width="1" />
<text x="263.2" y="342.7" >8</text>
<text x="276.2" y="342.7" >BLK/WHT</text>
<path d="M257.9,353.5 Q263.29999999999995,357.7 257.9,361.9" fill="none" stroke="#42424c" stroke-width="1" />
<text x="263.2" y="354.8" >9</text>
<text x="276.2" y="354.8" >WHT/BLK</text>
<path d="M257.9,365.6 Q263.29999999999995,369.8 257.9,374.0" fill="none" stroke="#42424c" stroke-width="1" />
<text x="263.2" y="365.8" >10</text>
<text x="280.8" y="365.8" >VIO/BRN</text>
<text x="263.2" y="379.9" text-decoration="underline" >C1%%U (CONN A)</text>
<rect x="246.5" y="393.75" width="54.75" height="397.95000000000005" fill="#dadafe" stroke="none"/>
<line x1="245.75" y1="393.75" x2="302.0" y2="393.75" stroke="#2a2a2a" stroke-width="1.5" stroke-dasharray="6.8 3.05"/>
<line x1="245.75" y1="791.7" x2="302.0" y2="791.7" stroke="#8c8ca4" stroke-width="1.5" stroke-dasharray="6.8 3.05"/>
<line x1="246.5" y1="393.75" x2="246.5" y2="791.7" stroke="#2a2a2a" stroke-width="1.5" stroke-dasharray="8.8 2.45"/>
<line x1="301.25" y1="393.75" x2="301.25" y2="791.7" stroke="#2a2a2a" stroke-width="1.5" stroke-dasharray="8.8 2.45"/>
<line x1="256.75" y1="405" x2="256.75" y2="779.6" stroke="#42424c" stroke-width="1" />
<line x1="269.25" y1="417" x2="269.25" y2="768.3" stroke="#42424c" stroke-width="1" />
<line x1="256.75" y1="405" x2="301.2" y2="405" stroke="#42424c" stroke-width="1" />
<polyline points="297.5,402.1 301.2,405 297.5,407.9" fill="none" stroke="#42424c" stroke-width="1" />
<path d="M304.5,400.8 Q309.9,405 304.5,409.2" fill="none" stroke="#42424c" stroke-width="1" />
<text x="310.6" y="400.7" >2</text>
<text x="327.6" y="400.7" >VIO/BRN</text>
<line x1="269.25" y1="417" x2="301.2" y2="417" stroke="#42424c" stroke-width="1" />
<polyline points="297.5,414.1 301.2,417 297.5,419.9" fill="none" stroke="#42424c" stroke-width="1" />
<path d="M304.5,412.8 Q309.9,417 304.5,421.2" fill="none" stroke="#42424c" stroke-width="1" />
<text x="310.6" y="412.7" >5</text>
<text x="327.6" y="412.7" >WHT/BLK</text>
<line x1="256.75" y1="440" x2="301.2" y2="440" stroke="#42424c" stroke-width="1" />
<polyline points="297.5,437.1 301.2,440 297.5,442.9" fill="none" stroke="#42424c" stroke-width="1" />
<circle cx="256.75" cy="440" r="1.3" fill="#111"/>
<path d="M304.5,435.8 Q309.9,440 304.5,444.2" fill="none" stroke="#42424c" stroke-width="1" />
<text x="310.6" y="436.5" >1</text>
<text x="327.6" y="436.5" >VIO/BRN</text>
<line x1="269.25" y1="451.75" x2="301.2" y2="451.75" stroke="#42424c" stroke-width="1" />
<polyline points="297.5,448.85 301.2,451.75 297.5,454.65" fill="none" stroke="#42424c" stroke-width="1" />
<circle cx="269.25" cy="451.75" r="1.3" fill="#111"/>
<path d="M304.5,447.55 Q309.9,451.75 304.5,455.95" fill="none" stroke="#42424c" stroke-width="1" />
<text x="310.6" y="448.25" >4</text>
<text x="327.6" y="448.25" >WHT/BLK</text>
<line x1="269.25" y1="593" x2="301.2" y2="593" stroke="#42424c" stroke-width="1" />
<polyline points="297.5,590.1 301.2,593 297.5,595.9" fill="none" stroke="#42424c" stroke-width="1" />
<circle cx="269.25" cy="593" r="1.3" fill="#111"/>
<path d="M304.5,588.8 Q309.9,593 304.5,597.2" fill="none" stroke="#42424c" stroke-width="1" />
<text x="310.6" y="588.9" >16</text>
<text x="327.6" y="588.9" >WHT/BLK</text>
<line x1="282" y1="604" x2="301.2" y2="604" stroke="#42424c" stroke-width="1" />
<polyline points="297.5,601.1 301.2,604 297.5,606.9" fill="none" stroke="#42424c" stroke-width="1" />
<path d="M304.5,599.8 Q309.9,604 304.5,608.2" fill="none" stroke="#42424c" stroke-width="1" />
<text x="310.6" y="600.5" >21</text>
<text x="327.6" y="600.5" >VIO/BRN</text>
<line x1="282" y1="627.5" x2="301.2" y2="627.5" stroke="#42424c" stroke-width="1" />
<polyline points="297.5,624.6 301.2,627.5 297.5,630.4" fill="none" stroke="#42424c" stroke-width="1" />
<path d="M304.5,623.3 Q309.9,627.5 304.5,631.7" fill="none" stroke="#42424c" stroke-width="1" />
<text x="310.6" y="624.0" >20</text>
<text x="327.6" y="624.0" >VIO/BRN</text>
<line x1="256.75" y1="651" x2="301.2" y2="651" stroke="#42424c" stroke-width="1" />
<polyline points="297.5,648.1 301.2,651 297.5,653.9" fill="none" stroke="#42424c" stroke-width="1" />
<circle cx="256.75" cy="651" r="1.3" fill="#111"/>
<path d="M304.5,646.8 Q309.9,651 304.5,655.2" fill="none" stroke="#42424c" stroke-width="1" />
<text x="310.6" y="646.9" >13</text>
<text x="327.6" y="646.9" >VIO/BRN</text>
<line x1="269.25" y1="710" x2="301.2" y2="710" stroke="#42424c" stroke-width="1" />
<polyline points="297.5,707.1 301.2,710 297.5,712.9" fill="none" stroke="#42424c" stroke-width="1" />
<circle cx="269.25" cy="710" r="1.3" fill="#111"/>
<path d="M304.5,705.8 Q309.9,710 304.5,714.2" fill="none" stroke="#42424c" stroke-width="1" />
<text x="310.6" y="705.9" >7</text>
<text x="327.6" y="705.9" >WHT/BLK</text>
<line x1="256.75" y1="721.3" x2="301.2" y2="721.3" stroke="#42424c" stroke-width="1" />
<polyline points="297.5,718.4 301.2,721.3 297.5,724.1999999999999" fill="none" stroke="#42424c" stroke-width="1" />
<circle cx="256.75" cy="721.3" r="1.3" fill="#111"/>
<path d="M304.5,717.0999999999999 Q309.9,721.3 304.5,725.5" fill="none" stroke="#42424c" stroke-width="1" />
<text x="310.6" y="717.8" >11</text>
<text x="327.6" y="717.8" >VIO/BRN</text>
<line x1="269.25" y1="768.3" x2="301.2" y2="768.3" stroke="#42424c" stroke-width="1" />
<polyline points="297.5,765.4 301.2,768.3 297.5,771.1999999999999" fill="none" stroke="#42424c" stroke-width="1" />
<path d="M304.5,764.0999999999999 Q309.9,768.3 304.5,772.5" fill="none" stroke="#42424c" stroke-width="1" />
<text x="310.6" y="764.8" >6</text>
<text x="327.6" y="764.8" >WHT/BLK</text>
<line x1="256.75" y1="779.6" x2="301.2" y2="779.6" stroke="#42424c" stroke-width="1" />
<polyline points="297.5,776.7 301.2,779.6 297.5,782.5" fill="none" stroke="#42424c" stroke-width="1" />
<path d="M304.5,775.4 Q309.9,779.6 304.5,783.8000000000001" fill="none" stroke="#42424c" stroke-width="1" />
<text x="310.6" y="776.1" >3</text>
<text x="327.6" y="776.1" >VIO/BRN</text>
<line x1="282" y1="604" x2="282" y2="627.5" stroke="#42424c" stroke-width="1" />
<rect x="312.5" y="469.25" width="38.25" height="47.75" fill="#dadafe" stroke="none"/>
<line x1="311.75" y1="469.25" x2="351.5" y2="469.25" stroke="#2a2a2a" stroke-width="1.5" stroke-dasharray="6.8 3.05"/>
<line x1="311.75" y1="517" x2="351.5" y2="517" stroke="#2a2a2a" stroke-width="1.5" stroke-dasharray="6.8 3.05"/>
<line x1="312.5" y1="469.25" x2="312.5" y2="517" stroke="#2a2a2a" stroke-width="1.5" stroke-dasharray="8.8 2.45"/>
<line x1="350.75" y1="469.25" x2="350.75" y2="517" stroke="#2a2a2a" stroke-width="1.5" stroke-dasharray="8.8 2.45"/>
<polyline points="350.6,475.5 330,475.5 330,486.8" fill="none" stroke="#42424c" stroke-width="1" />
<polyline points="330,486.8 327.4,488.3 332.6,490.8 327.4,493.4 332.6,496 327.4,498.6 332.6,501.2 330,502.6 330,510 350.6,510" fill="none" stroke="#42424c" stroke-width="1" />
<polyline points="330,486.8 322.5,486.8 322.5,496.6 326,496.6" fill="none" stroke="#42424c" stroke-width="1" />
<polygon points="328.4,496.6 324.8,494.8 324.8,498.4" fill="#111"/>
<circle cx="330" cy="486.8" r="1.2" fill="#111"/>
<polyline points="346.90000000000003,472.6 350.6,475.5 346.90000000000003,478.4" fill="none" stroke="#42424c" stroke-width="1" />
<polyline points="346.90000000000003,507.1 350.6,510 346.90000000000003,512.9" fill="none" stroke="#42424c" stroke-width="1" />
<path d="M352.6,471.3 Q358.0,475.5 352.6,479.7" fill="none" stroke="#42424c" stroke-width="1" />
<path d="M352.6,505.8 Q358.0,510 352.6,514.2" fill="none" stroke="#42424c" stroke-width="1" />
<text x="358.6" y="471.8" >3</text>
<text x="369.6" y="471.8" >DK BLU</text>
<text x="358.6" y="506.5" >2</text>
<text x="369.6" y="506.5" >BLK/LT BLU</text>
<text x="312.5" y="526.8" >FUEL PUMP</text>
<text x="312.5" y="535.4" >MODULE</text>
<text x="312.5" y="544.0" >(FUEL TANK)</text>
<rect x="340.7" y="118.1" width="364.8" height="44.80000000000001" fill="#dadafe" stroke="none"/>
<line x1="339.95" y1="118.1" x2="706.25" y2="118.1" stroke="#3a3a3a" stroke-width="1.5" stroke-dasharray="6.8 3.05"/>
<line x1="339.95" y1="162.9" x2="706.25" y2="162.9" stroke="#3a3a3a" stroke-width="1.5" stroke-dasharray="6.8 3.05"/>
<line x1="340.7" y1="118.1" x2="340.7" y2="162.9" stroke="#3a3a3a" stroke-width="1.5" stroke-dasharray="8.8 2.45"/>
<line x1="705.5" y1="118.1" x2="705.5" y2="162.9" stroke="#3a3a3a" stroke-width="1.5" stroke-dasharray="8.8 2.45"/>
<line x1="353.9" y1="118.5" x2="353.9" y2="133" stroke="#42424c" stroke-width="1" />
<line x1="353.9" y1="146.3" x2="353.9" y2="163" stroke="#42424c" stroke-width="1" />
<path d="M353.9,133 C357.5,135.5 357.5,138 353.9,139.7 C350.29999999999995,141.4 350.29999999999995,144 353.9,146.3" fill="none" stroke="#42424c" stroke-width="1" />
<circle cx="353.9" cy="133" r="1.2" fill="#111"/>
<circle cx="353.9" cy="146.3" r="1.2" fill="#111"/>
<polyline points="350.59999999999997,159.79999999999998 353.9,163.2 357.2,159.79999999999998" fill="none" stroke="#42424c" stroke-width="1" />
<path d="M350.2,168.2 C351.5,170.7 356.29999999999995,170.7 357.59999999999997,168.2" fill="none" stroke="#333" stroke-width="1.25" />
<line x1="412.3" y1="118.5" x2="412.3" y2="133" stroke="#42424c" stroke-width="1" />
<line x1="412.3" y1="146.3" x2="412.3" y2="163" stroke="#42424c" stroke-width="1" />
<path d="M412.3,133 C415.90000000000003,135.5 415.90000000000003,138 412.3,139.7 C408.7,141.4 408.7,144 412.3,146.3" fill="none" stroke="#42424c" stroke-width="1" />
<circle cx="412.3" cy="133" r="1.2" fill="#111"/>
<circle cx="412.3" cy="146.3" r="1.2" fill="#111"/>
<polyline points="409.0,159.79999999999998 412.3,163.2 415.6,159.79999999999998" fill="none" stroke="#42424c" stroke-width="1" />
<path d="M408.6,168.2 C409.90000000000003,170.7 414.7,170.7 416.0,168.2" fill="none" stroke="#333" stroke-width="1.25" />
<line x1="646.5" y1="118.5" x2="646.5" y2="133" stroke="#42424c" stroke-width="1" />
<line x1="646.5" y1="146.3" x2="646.5" y2="163" stroke="#42424c" stroke-width="1" />
<path d="M646.5,133 C650.1,135.5 650.1,138 646.5,139.7 C642.9,141.4 642.9,144 646.5,146.3" fill="none" stroke="#42424c" stroke-width="1" />
<circle cx="646.5" cy="133" r="1.2" fill="#111"/>
<circle cx="646.5" cy="146.3" r="1.2" fill="#111"/>
<polyline points="643.2,159.79999999999998 646.5,163.2 649.8,159.79999999999998" fill="none" stroke="#42424c" stroke-width="1" />
<path d="M642.8,168.2 C644.1,170.7 648.9,170.7 650.2,168.2" fill="none" stroke="#333" stroke-width="1.25" />
<text x="363.75" y="105.8" text-anchor="middle" >HOT IN RUN</text>
<text x="363.75" y="115.0" text-anchor="middle" >OR START</text>
<text x="422" y="105.8" text-anchor="middle" >HOT AT</text>
<text x="422" y="115.0" text-anchor="middle" >ALL TIMES</text>
<text x="656.5" y="105.8" text-anchor="middle" >HOT IN RUN</text>
<text x="656.5" y="115.0" text-anchor="middle" >OR START</text>
<text x="334.5" y="123.3" text-anchor="end" >JUNCTION</text>
<text x="336.3" y="132.0" text-anchor="end" >BLOCK</text>
<text x="334.5" y="140.1" text-anchor="end" >(LEFT END</text>
<text x="336.3" y="148.8" text-anchor="end" >OF DASH)</text>
<text x="360.8" y="138.1" >FUSE 17</text>
<text x="360.8" y="146.8" >10A</text>
<text x="419.3" y="138.1" >FUSE 1</text>
<text x="419.3" y="146.8" >15A</text>
<text x="653.5" y="138.1" >FUSE 11</text>
<text x="653.5" y="146.8" >10A</text>
<text transform="translate(351.1,175.8) rotate(-90)" text-anchor="middle">8</text>
<text transform="translate(365.1,178.2) rotate(-90)" text-anchor="middle" text-decoration="underline">C8</text>
<text transform="translate(349.9,211.5) rotate(-90)" text-anchor="middle">ORG/LT GRN</text>
<text transform="translate(407.9,174.6) rotate(-90)" text-anchor="middle">1</text>
<text transform="translate(422.7,178.2) rotate(-90)" text-anchor="middle" text-decoration="underline">C7</text>
<text transform="translate(408.5,210) rotate(-90)" text-anchor="middle">PNK/LT BLU</text>
<text transform="translate(642.9,177.2) rotate(-90)" text-anchor="middle">14</text>
<text transform="translate(657.5,178.2) rotate(-90)" text-anchor="middle" text-decoration="underline">C3</text>
<text transform="translate(642.9,212.3) rotate(-90)" text-anchor="middle">DK BLU/WHT</text>
<text transform="translate(454.9,227.8) rotate(-90)" text-anchor="middle">BLK/TAN</text>
<text x="417.6" y="258.1" >S250</text>
<text x="652" y="258.1" >S232</text>
<line x1="455.4" y1="199.4" x2="463.2" y2="199.4" stroke="#222" stroke-width="1" />
<line x1="456.8" y1="201.4" x2="461.8" y2="201.4" stroke="#222" stroke-width="1" />
<line x1="458.2" y1="203.3" x2="460.4" y2="203.3" stroke="#222" stroke-width="1" />
<circle cx="459.3" cy="205.6" r="1.5" fill="#111"/>
<text x="466.8" y="208.8" >G100</text>
<text x="466.8" y="217.5" >(FRONT OF LEFT</text>
<text x="466.8" y="225.8" >FRONT FENDER)</text>
<text x="717.8" y="182.5" >(ENGINE HARN,</text>
<text x="717.8" y="190.8" >TOP REAR OF</text>
<text x="717.8" y="199.1" >ENGINE)</text>
<text x="717.8" y="224.3" >(ENGINE HARN,</text>
<text x="717.8" y="232.7" >RIGHT SIDE OF</text>
<text x="717.8" y="241.1" >FIREWALL)</text>
<rect x="541.3" y="363.3" width="31.90000000000009" height="49.19999999999999" fill="#dadafe" stroke="#777" stroke-width="1" />
<polyline points="573,370 552.8,370 552.8,376.8" fill="none" stroke="#42424c" stroke-width="1" />
<polyline points="552.8,376.8 550,378.40000000000003 555.6,381.40000000000003 550,384.40000000000003 555.6,387.40000000000003 550,390.40000000000003 555.6,393.40000000000003 552.8,395.0 552.8,405 573,405" fill="none" stroke="#42424c" stroke-width="1" />
<line x1="548" y1="380.7" x2="556.2" y2="393.2" stroke="#222" stroke-width="1" />
<polygon points="547.4,379.8 550.6,381.6 548.4,383.2" fill="#111"/>
<polyline points="569.3,367.1 573,370 569.3,372.9" fill="none" stroke="#42424c" stroke-width="1" />
<polyline points="569.3,402.1 573,405 569.3,407.9" fill="none" stroke="#42424c" stroke-width="1" />
<path d="M574.4,365.8 Q579.8,370 574.4,374.2" fill="none" stroke="#777" stroke-width="1" />
<path d="M574.4,400.8 Q579.8,405 574.4,409.2" fill="none" stroke="#777" stroke-width="1" />
<rect x="541.3" y="469.3" width="31.90000000000009" height="47.69999999999999" fill="#dadafe" stroke="#777" stroke-width="1" />
<polyline points="573,475 552.8,475 552.8,481.8" fill="none" stroke="#42424c" stroke-width="1" />
<polyline points="552.8,481.8 550,483.40000000000003 555.6,486.40000000000003 550,489.40000000000003 555.6,492.40000000000003 550,495.40000000000003 555.6,498.40000000000003 552.8,500.0 552.8,510.5 573,510.5" fill="none" stroke="#42424c" stroke-width="1" />
<line x1="548" y1="485.7" x2="556.2" y2="498.2" stroke="#222" stroke-width="1" />
<polygon points="547.4,484.8 550.6,486.6 548.4,488.2" fill="#111"/>
<polyline points="569.3,472.1 573,475 569.3,477.9" fill="none" stroke="#42424c" stroke-width="1" />
<polyline points="569.3,507.6 573,510.5 569.3,513.4" fill="none" stroke="#42424c" stroke-width="1" />
<path d="M574.4,470.8 Q579.8,475 574.4,479.2" fill="none" stroke="#777" stroke-width="1" />
<path d="M574.4,506.3 Q579.8,510.5 574.4,514.7" fill="none" stroke="#777" stroke-width="1" />
<text x="541.4" y="334.8" >(2.5L: RIGHT SIDE OF ENGINE)</text>
<text x="541.4" y="342.7" >(OTHER: TOP REAR OF ENGINE)</text>
<text x="541.4" y="351.8" >OIL PRESSURE</text>
<text x="541.4" y="359.9" >SENSOR</text>
<text x="579.4" y="366.1" >2</text>
<text x="596.8" y="366.1" >GRY/YEL</text>
<text x="579.4" y="400.9" >1</text>
<text x="596.8" y="392.5" >BLK/</text>
<text x="596.8" y="400.9" >LT BLU</text>
<text x="579.6" y="471.8" >BLK/LT BLU</text>
<text x="579.6" y="506.8" >TAN/BLK</text>
<text x="541.5" y="526.8" >ENGINE COOLANT</text>
<text x="541.5" y="534.6" >TEMPERATURE SENSOR</text>
<text x="541.5" y="543.8" >(2.5L: ON</text>
<text x="541.5" y="551.8" >THERMOSTAT HOUSING</text>
<text x="541.5" y="560.5" >(OTHER: TOP OF</text>
<text x="541.5" y="568.8" >ENGINE, NEAR GEN)</text>
<text x="647.2" y="399.0" text-anchor="middle" >S103</text>
<text x="705.4" y="399.0" text-anchor="middle" >S101</text>
<text x="666.6" y="458.2" text-anchor="middle" >2.5L</text>
<text x="699.8" y="461.2" text-anchor="middle" >OTHER</text>
<text x="651.8" y="496.9" >S149</text>
<text x="690.5" y="535.0" text-anchor="middle" >(BODY HARN,</text>
<text x="690.5" y="544.0" text-anchor="middle" >NEAR FUEL</text>
<text x="690.5" y="553.0" text-anchor="middle" >TANK BREAKOUT)</text>
<rect x="592.7" y="638" width="38.09999999999991" height="26.399999999999977" fill="#dadafe" stroke="none"/>
<line x1="591.95" y1="638" x2="631.55" y2="638" stroke="#2a2a2a" stroke-width="1.5" stroke-dasharray="6.8 3.05"/>
<line x1="591.95" y1="664.4" x2="631.55" y2="664.4" stroke="#2a2a2a" stroke-width="1.5" stroke-dasharray="6.8 3.05"/>
<line x1="592.7" y1="638" x2="592.7" y2="664.4" stroke="#2a2a2a" stroke-width="1.5" stroke-dasharray="8.8 2.45"/>
<line x1="630.8" y1="638" x2="630.8" y2="664.4" stroke="#2a2a2a" stroke-width="1.5" stroke-dasharray="8.8 2.45"/>
<line x1="595" y1="651" x2="628.6" y2="651" stroke="#42424c" stroke-width="1" />
<polyline points="598.6,648.4 595,651 598.6,653.6" fill="none" stroke="#42424c" stroke-width="1" />
<polyline points="625,648.4 628.6,651 625,653.6" fill="none" stroke="#42424c" stroke-width="1" />
<line x1="594.6" y1="647.6" x2="594.6" y2="654.4" stroke="#42424c" stroke-width="1" />
<line x1="629" y1="647.6" x2="629" y2="654.4" stroke="#42424c" stroke-width="1" />
<circle cx="611.8" cy="651" r="1.2" fill="#111"/>
<path d="M591,646.8 Q585.6,651 591,655.2" fill="none" stroke="#42424c" stroke-width="1" />
<path d="M632.6,646.8 Q638.0,651 632.6,655.2" fill="none" stroke="#42424c" stroke-width="1" />
<text x="552.6" y="648.1" >BLK</text>
<text x="578.2" y="648.1" >17</text>
<text x="637.4" y="648.1" >4</text>
<text x="651.8" y="648.1" >BLK</text>
<text x="611.8" y="674.8" text-anchor="middle" >JOINT CONN 4</text>
<text x="611.8" y="683.35" text-anchor="middle" >(BEHIND LEFT</text>
<text x="611.8" y="691.9" text-anchor="middle" >SIDE OF DASH)</text>
<circle cx="681.5" cy="651" r="1.5" fill="#111"/>
<line x1="684.8" y1="647.4" x2="684.8" y2="654.6" stroke="#222" stroke-width="1" />
<line x1="687" y1="648.8" x2="687" y2="653.2" stroke="#222" stroke-width="1" />
<line x1="689" y1="650" x2="689" y2="652" stroke="#222" stroke-width="1" />
<text x="692" y="655.8" >G202</text>
<text x="692" y="665.0" >(LEFT SIDE</text>
<text x="692" y="673.5" >OF DASH)</text>
<rect x="816.4" y="252.5" width="59.0" height="83.80000000000001" fill="#dadafe" stroke="none"/>
<line x1="815.65" y1="252.5" x2="876.15" y2="252.5" stroke="#2a2a2a" stroke-width="1.5" stroke-dasharray="6.8 3.05"/>
<line x1="815.65" y1="336.3" x2="876.15" y2="336.3" stroke="#2a2a2a" stroke-width="1.5" stroke-dasharray="6.8 3.05"/>
<line x1="816.4" y1="252.5" x2="816.4" y2="336.3" stroke="#2a2a2a" stroke-width="1.5" stroke-dasharray="8.8 2.45"/>
<line x1="875.4" y1="252.5" x2="875.4" y2="336.3" stroke="#2a2a2a" stroke-width="1.5" stroke-dasharray="8.8 2.45"/>
<rect x="816.4" y="351.3" width="59.0" height="294.49999999999994" fill="#dadafe" stroke="none"/>
<line x1="815.65" y1="351.3" x2="876.15" y2="351.3" stroke="#2a2a2a" stroke-width="1.5" stroke-dasharray="6.8 3.05"/>
<line x1="815.65" y1="645.8" x2="876.15" y2="645.8" stroke="#2a2a2a" stroke-width="1.5" stroke-dasharray="6.8 3.05"/>
<line x1="816.4" y1="351.3" x2="816.4" y2="645.8" stroke="#2a2a2a" stroke-width="1.5" stroke-dasharray="8.8 2.45"/>
<line x1="875.4" y1="351.3" x2="875.4" y2="645.8" stroke="#2a2a2a" stroke-width="1.5" stroke-dasharray="8.8 2.45"/>
<rect x="816.4" y="695.6" width="59.0" height="37.39999999999998" fill="#dadafe" stroke="none"/>
<line x1="815.65" y1="695.6" x2="876.15" y2="695.6" stroke="#2a2a2a" stroke-width="1.5" stroke-dasharray="6.8 3.05"/>
<line x1="815.65" y1="733" x2="876.15" y2="733" stroke="#2a2a2a" stroke-width="1.5" stroke-dasharray="6.8 3.05"/>
<line x1="816.4" y1="695.6" x2="816.4" y2="733" stroke="#2a2a2a" stroke-width="1.5" stroke-dasharray="8.8 2.45"/>
<line x1="875.4" y1="695.6" x2="875.4" y2="733" stroke="#2a2a2a" stroke-width="1.5" stroke-dasharray="8.8 2.45"/>
<path d="M813.1,260.29999999999995 L810.5,263.4 Q809.7,264.4 810.5,265.4 L813.1,268.5" fill="none" stroke="#222" stroke-width="1.2" />
<text x="733.3" y="261.1" >G52</text>
<text x="790" y="261.1" text-anchor="end" >YEL</text>
<text x="807.6" y="261.1" text-anchor="end" >8</text>
<text x="820.3" y="267.7" >VTSS CTRL</text>
<text x="808.2" y="274.3" text-anchor="end" text-decoration="underline" >C2</text>
<path d="M813.1,283.5 L810.5,286.6 Q809.7,287.6 810.5,288.6 L813.1,291.70000000000005" fill="none" stroke="#222" stroke-width="1.2" />
<text x="720" y="284.3" >G10</text>
<text x="790" y="284.3" text-anchor="end" >LT GRN/ORG</text>
<text x="807.6" y="284.3" text-anchor="end" >2</text>
<text x="820.3" y="290.9" >CHIME CTRL</text>
<text x="808.2" y="297.5" text-anchor="end" text-decoration="underline" >C1</text>
<path d="M813.1,306.9 L810.5,310 Q809.7,311 810.5,312 L813.1,315.1" fill="none" stroke="#222" stroke-width="1.2" />
<text x="738.8" y="306.5" >D1</text>
<text x="790" y="306.5" text-anchor="end" >VIO/BRN</text>
<text x="807.6" y="306.5" text-anchor="end" >16</text>
<text x="820.3" y="314.3" >CCD (-)</text>
<path d="M813.1,318.9 L810.5,322 Q809.7,323 810.5,324 L813.1,327.1" fill="none" stroke="#222" stroke-width="1.2" />
<text x="737.8" y="319.2" >D2</text>
<text x="790" y="319.2" text-anchor="end" >WHT/BLK</text>
<text x="807.6" y="319.2" text-anchor="end" >17</text>
<text x="820.3" y="326.3" >CCD (+)</text>
<text x="808.2" y="332.9" text-anchor="end" text-decoration="underline" >C2</text>
<path d="M813.1,365.9 L810.5,369 Q809.7,370 810.5,371 L813.1,374.1" fill="none" stroke="#222" stroke-width="1.2" />
<text x="733.3" y="365.8" >G60</text>
<text x="790" y="365.8" text-anchor="end" >GRY/YEL</text>
<text x="807.6" y="365.8" text-anchor="end" >23</text>
<text x="820.3" y="373.3" >OIL PRESS</text>
<text x="808.2" y="379.9" text-anchor="end" text-decoration="underline" >C2</text>
<path d="M813.1,400.9 L810.5,404 Q809.7,405 810.5,406 L813.1,409.1" fill="none" stroke="#222" stroke-width="1.2" />
<text x="733.3" y="400.8" >K4</text>
<text x="795.8" y="400.8" text-anchor="end" >BLK/LT BLU</text>
<text x="807.6" y="400.8" text-anchor="end" >4</text>
<text x="820.3" y="408.3" >SENS RTRN</text>
<text x="808.2" y="414.9" text-anchor="end" text-decoration="underline" >C1</text>
<path d="M813.1,424.29999999999995 L810.5,427.4 Q809.7,428.4 810.5,429.4 L813.1,432.5" fill="none" stroke="#222" stroke-width="1.2" />
<text x="737" y="425.1" >G4</text>
<text x="790" y="425.1" text-anchor="end" >DK BLU</text>
<text x="807.6" y="425.1" text-anchor="end" >26</text>
<text x="820.3" y="431.7" >FUEL LEVEL</text>
<text x="808.2" y="438.3" text-anchor="end" text-decoration="underline" >C3</text>
<path d="M813.1,506.4 L810.5,509.5 Q809.7,510.5 810.5,511.5 L813.1,514.6" fill="none" stroke="#222" stroke-width="1.2" />
<text x="738.3" y="507.2" >K2</text>
<text x="790" y="507.2" text-anchor="end" >TAN/BLK</text>
<text x="807.6" y="507.2" text-anchor="end" >16</text>
<text x="820.3" y="513.8" >ECT</text>
<text x="808.2" y="520.4" text-anchor="end" text-decoration="underline" >C1</text>
<path d="M813.1,576.3 L810.5,579.4 Q809.7,580.4 810.5,581.4 L813.1,584.5" fill="none" stroke="#222" stroke-width="1.2" />
<text x="718.8" y="577.1" >T18</text>
<text x="790" y="577.1" text-anchor="end" >LT GRN/ORG</text>
<text x="807.6" y="577.1" text-anchor="end" >6</text>
<text x="820.3" y="583.7" >O/D CTRL</text>
<path d="M813.1,588.9 L810.5,592 Q809.7,593 810.5,594 L813.1,597.1" fill="none" stroke="#222" stroke-width="1.2" />
<text x="737.8" y="588.9" >D2</text>
<text x="790" y="588.9" text-anchor="end" >WHT/BLK</text>
<text x="807.6" y="588.9" text-anchor="end" >28</text>
<text x="820.3" y="596.3" >CCD (-)</text>
<path d="M813.1,599.9 L810.5,603 Q809.7,604 810.5,605 L813.1,608.1" fill="none" stroke="#222" stroke-width="1.2" />
<text x="738.8" y="599.8" >D1</text>
<text x="790" y="599.8" text-anchor="end" >VIO/BRN</text>
<text x="807.6" y="599.8" text-anchor="end" >30</text>
<text x="820.3" y="607.3" >CCD (+)</text>
<text x="808.2" y="613.9" text-anchor="end" text-decoration="underline" >C3</text>
<path d="M813.1,623.1 L810.5,626.2 Q809.7,627.2 810.5,628.2 L813.1,631.3000000000001" fill="none" stroke="#222" stroke-width="1.2" />
<text x="737" y="623.9" >G7</text>
<text x="790" y="623.9" text-anchor="end" >WHT/ORG</text>
<text x="807.6" y="623.9" text-anchor="end" >27</text>
<text x="820.3" y="630.5" >VSS IN</text>
<text x="808.2" y="637.1" text-anchor="end" text-decoration="underline" >C2</text>
<path d="M813.1,705.9 L810.5,709 Q809.7,710 810.5,711 L813.1,714.1" fill="none" stroke="#222" stroke-width="1.2" />
<text x="737.8" y="705.8" >D2</text>
<text x="790" y="705.8" text-anchor="end" >WHT/BLK</text>
<text x="807.6" y="705.8" text-anchor="end" >18</text>
<text x="820.3" y="713.3" >CCD (-)</text>
<path d="M813.1,717.1999999999999 L810.5,720.3 Q809.7,721.3 810.5,722.3 L813.1,725.4" fill="none" stroke="#222" stroke-width="1.2" />
<text x="738.8" y="717.5" >D1</text>
<text x="790" y="717.5" text-anchor="end" >VIO/BRN</text>
<text x="807.6" y="717.5" text-anchor="end" >19</text>
<text x="820.3" y="724.6" >CCD (+)</text>
<text x="875.2" y="213.8" text-anchor="end" xml:space="preserve">(BEHIND RIGHT </text>
<text x="875.2" y="222.9" text-anchor="end" xml:space="preserve">SIDE OF DASH, </text>
<text x="875.2" y="231.0" text-anchor="end" xml:space="preserve">NEAR GLOVE BOX)</text>
<text x="875.2" y="239.9" text-anchor="end" xml:space="preserve">CENTRAL </text>
<text x="875.2" y="248.0" text-anchor="end" xml:space="preserve">TIMER MODULE</text>
<text x="875.2" y="655.8" text-anchor="end" xml:space="preserve">POWERTRAIN </text>
<text x="875.2" y="664.2" text-anchor="end" xml:space="preserve">CONTROL MODULE</text>
<text x="875.2" y="672.6" text-anchor="end" xml:space="preserve">(RIGHT FRONT </text>
<text x="875.2" y="681.0" text-anchor="end" xml:space="preserve">INNER FENDER)</text>
<text x="875.2" y="743.0" text-anchor="end" xml:space="preserve">AIR BAG </text>
<text x="875.2" y="751.4" text-anchor="end" xml:space="preserve">CONTROL </text>
<text x="875.2" y="759.8" text-anchor="end" xml:space="preserve">MODULE</text>
<text x="875.2" y="768.2" text-anchor="end" xml:space="preserve">(UNDER CENTER </text>
<text x="875.2" y="776.6" text-anchor="end" xml:space="preserve">OF DASH ON </text>
<text x="875.2" y="785.0" text-anchor="end" xml:space="preserve">TRANS TUNNEL)</text>
</g></svg></body></html>
